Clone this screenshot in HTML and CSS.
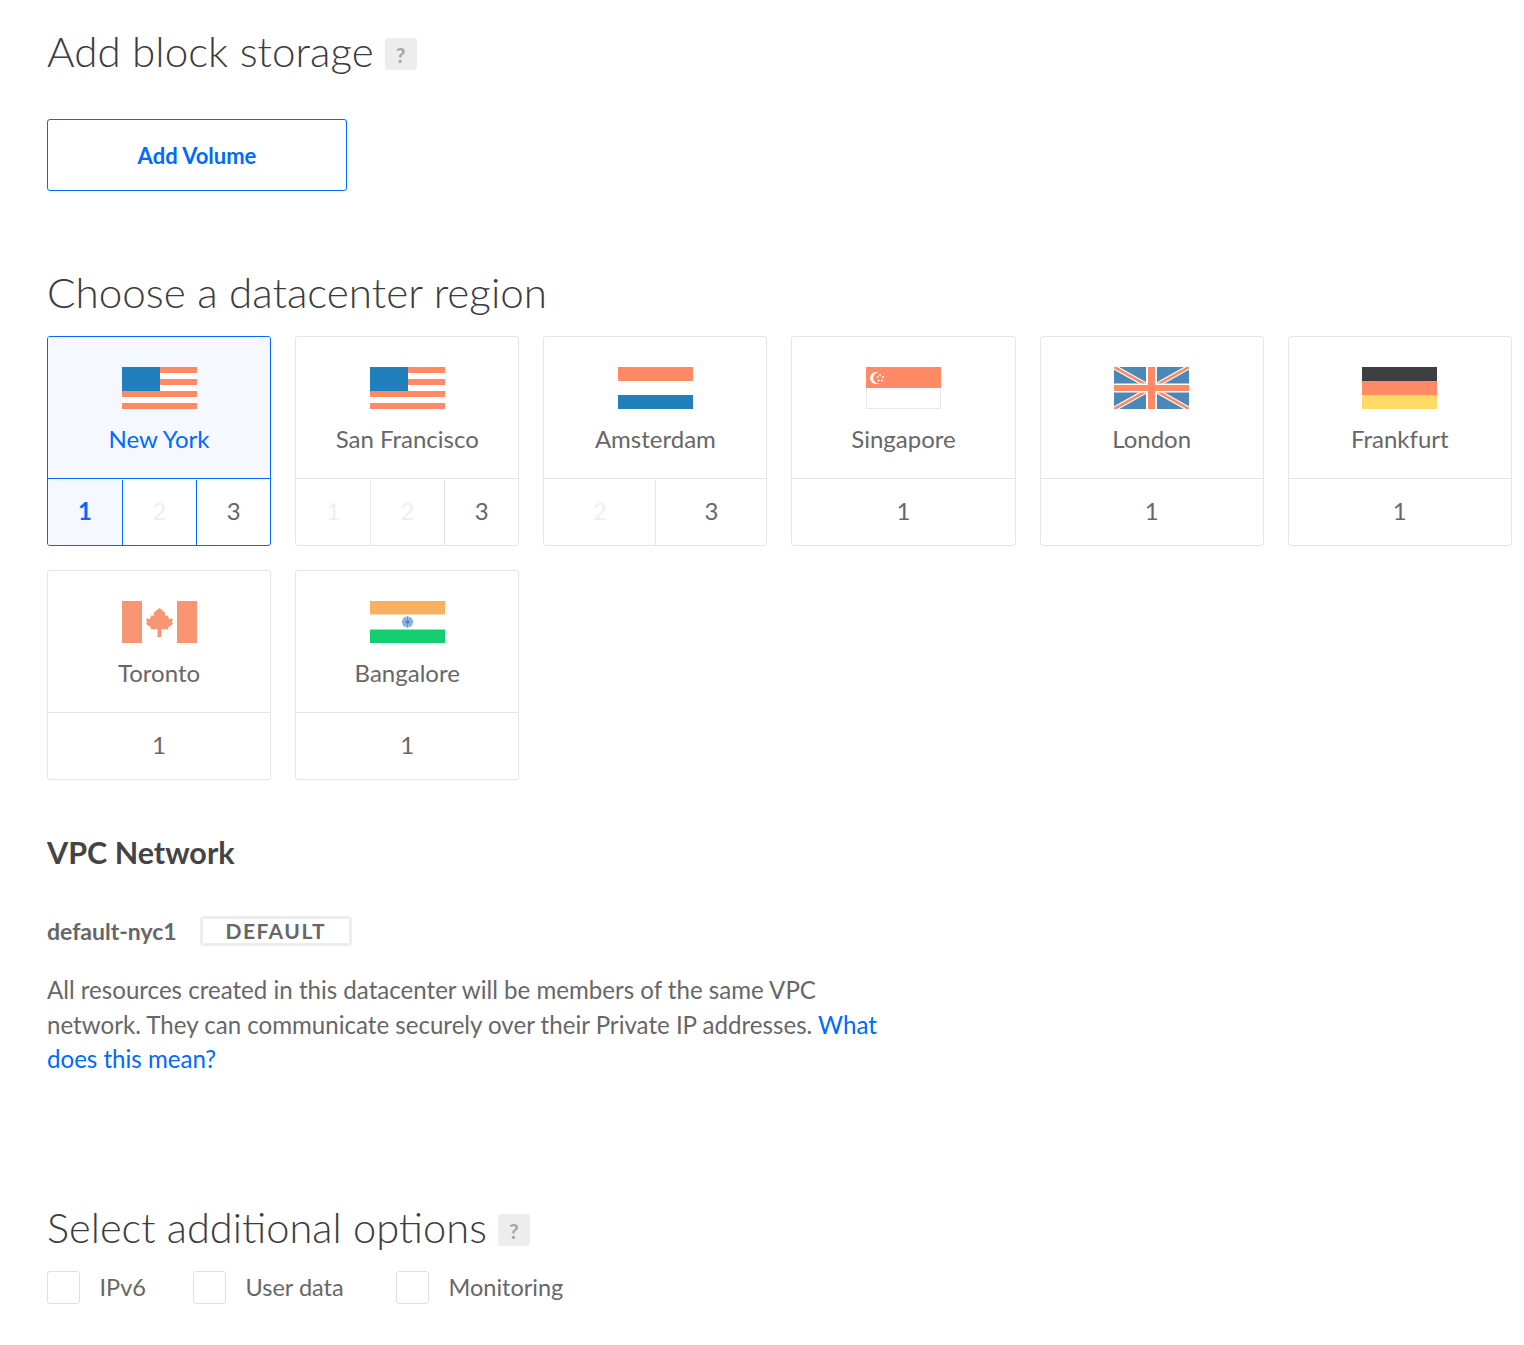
FILE: index.html
```html
<!DOCTYPE html>
<html lang="en">
<head>
<meta charset="utf-8">
<title>Create Droplet</title>
<link rel="stylesheet" href="styles.css">
</head>
<body>
<main class="page">
  <section class="storage">
    <h2 class="title">Add block storage <span class="help">?</span></h2>
    <button class="add-volume" type="button">Add Volume</button>
  </section>

  <section class="regions">
    <h2 class="title">Choose a datacenter region</h2>
    <div class="region-grid">
      <div class="card selected">
        <div class="card-top">
          <svg class="flag" viewBox="0 0 75 42"><rect width="75" height="42" fill="#fff"/><g fill="#ff8a65"><rect x="37" width="38" height="6"/><rect x="37" y="12" width="38" height="6"/><rect y="24" width="75" height="6"/><rect y="36" width="75" height="6"/></g><rect width="38" height="24" fill="#1f80bb"/></svg>
          <div class="name">New York</div>
        </div>
        <div class="cells"><span class="cell active">1</span><span class="cell off">2</span><span class="cell">3</span></div>
      </div>
      <div class="card">
        <div class="card-top">
          <svg class="flag" viewBox="0 0 75 42"><rect width="75" height="42" fill="#fff"/><g fill="#ff8a65"><rect x="37" width="38" height="6"/><rect x="37" y="12" width="38" height="6"/><rect y="24" width="75" height="6"/><rect y="36" width="75" height="6"/></g><rect width="38" height="24" fill="#1f80bb"/></svg>
          <div class="name">San Francisco</div>
        </div>
        <div class="cells"><span class="cell off">1</span><span class="cell off">2</span><span class="cell">3</span></div>
      </div>
      <div class="card">
        <div class="card-top">
          <svg class="flag" viewBox="0 0 75 42"><rect width="75" height="14" fill="#ff8a65"/><rect y="14" width="75" height="14" fill="#fff"/><rect y="28" width="75" height="14" fill="#1f80bb"/></svg>
          <div class="name">Amsterdam</div>
        </div>
        <div class="cells"><span class="cell off">2</span><span class="cell">3</span></div>
      </div>
      <div class="card">
        <div class="card-top">
          <svg class="flag" viewBox="0 0 75 42"><rect x=".5" y="20" width="74" height="21.500" fill="#fff" stroke="#e8e8e8"/><rect width="75" height="21" fill="#ff8a65"/><circle cx="10" cy="11" r="6" fill="#fff"/><circle cx="12.500" cy="11" r="5.400" fill="#ff8a65"/><g fill="#fff"><circle cx="14" cy="8.200" r="1"/><circle cx="17" cy="10" r="1"/><circle cx="16" cy="13.400" r="1"/><circle cx="12.600" cy="13.400" r="1"/><circle cx="11.600" cy="10" r="1"/></g></svg>
          <div class="name">Singapore</div>
        </div>
        <div class="cells"><span class="cell">1</span></div>
      </div>
      <div class="card">
        <div class="card-top">
          <svg class="flag" viewBox="0 0 75 42"><rect width="75" height="42" fill="#4b88b8"/><path d="M0 0 75 42M75 0 0 42" stroke="#fff" stroke-width="5"/><path d="M0 0 75 42M75 0 0 42" stroke="#ff8a65" stroke-width="2.800"/><rect x="32" width="11" height="42" fill="#fff"/><rect y="16.500" width="75" height="9" fill="#fff"/><rect x="34" width="7" height="42" fill="#ff8a65"/><rect y="18" width="75" height="6" fill="#ff8a65"/></svg>
          <div class="name">London</div>
        </div>
        <div class="cells"><span class="cell">1</span></div>
      </div>
      <div class="card">
        <div class="card-top">
          <svg class="flag" viewBox="0 0 75 42"><rect width="75" height="14" fill="#3f3f3f"/><rect y="14" width="75" height="14" fill="#ff8a65"/><rect y="28" width="75" height="14" fill="#ffdb66"/></svg>
          <div class="name">Frankfurt</div>
        </div>
        <div class="cells"><span class="cell">1</span></div>
      </div>
      <div class="card">
        <div class="card-top">
          <svg class="flag" viewBox="0 0 75 42"><rect width="20" height="42" fill="#f89673"/><rect x="55" width="20" height="42" fill="#f89673"/><path d="M37.500 7 43 11.500 43.500 15 46 14.500 47 18 51 17.500 50 21 51 23 46.500 26 46 28.500 39.500 28 39.500 36 35.500 36 35.500 28 29 28.500 28.500 26 24 23 25 21 24 17.500 28 18 29 14.500 31.500 15 32 11.500Z" fill="#f89673"/></svg>
          <div class="name">Toronto</div>
        </div>
        <div class="cells"><span class="cell">1</span></div>
      </div>
      <div class="card">
        <div class="card-top">
          <svg class="flag" viewBox="0 0 75 42"><rect width="75" height="13.500" fill="#f6b162"/><rect y="28.500" width="75" height="13.500" fill="#14cf6f"/><circle cx="37.500" cy="21" r="5.700" fill="#9dbee6"/><circle cx="37.500" cy="21" r="1.600" fill="#2f6fb8"/><path d="M37.500 15.500v11M32 21h11M33.600 17.100l7.800 7.800M41.400 17.100l-7.800 7.800" stroke="#4a86c8" stroke-width=".8"/></svg>
          <div class="name">Bangalore</div>
        </div>
        <div class="cells"><span class="cell">1</span></div>
      </div>
    </div>
  </section>

  <section class="vpc">
    <h3 class="vpc-title">VPC Network</h3>
    <div class="vpc-row"><span class="vpc-name">default-nyc1</span><span class="badge">DEFAULT</span></div>
    <p class="vpc-text">All resources created in this datacenter will be members of the same VPC network. They can communicate securely over their Private IP addresses. <a href="#">What does this mean?</a></p>
  </section>

  <section class="options">
    <h2 class="title title-tight">Select additional options <span class="help">?</span></h2>
    <div class="option-row">
      <label class="option"><span class="box"></span>IPv6</label>
      <label class="option"><span class="box"></span>User data</label>
      <label class="option"><span class="box"></span>Monitoring</label>
    </div>
  </section>
</main>
</body>
</html>
```
FILE: styles.css
```css
* { box-sizing: border-box; }
html, body { margin: 0; background: #fff; }
body { font-family: Lato, "Open Sans", sans-serif; color: #676767; }
.page { padding: 27px 12.100px 0 47px; height: 1345px; overflow: hidden; }

.title {
  margin: 0;
  font-size: 42.200px;
  line-height: 48px;
  font-weight: 300;
  color: #3c3c3c;
  display: flex;
  align-items: center;
  gap: 11px;
}
.title-tight { font-size: 41.600px; }
.help {
  width: 32px;
  height: 32px;
  margin-top: 6px;
  border-radius: 3px;
  background: #ededed;
  color: #a5a5a5;
  font-size: 21px;
  font-weight: 700;
  line-height: 34px;
  text-align: center;
}

.add-volume {
  display: block;
  width: 300px;
  height: 72px;
  margin-top: 44px;
  background: #fff;
  border: 1px solid #0069ff;
  border-radius: 3px;
  color: #0069ff;
  font: 700 22px Lato, sans-serif;
}

.regions { margin-top: 77px; }
.region-grid {
  margin-top: 20px;
  display: grid;
  grid-template-columns: repeat(6, 1fr);
  gap: 24px;
}
.card {
  height: 210px;
  border: 1px solid #e5e5e5;
  border-radius: 3px;
  display: flex;
  flex-direction: column;
  overflow: hidden;
}
.card-top {
  height: 142px;
  padding-top: 30px;
  border-bottom: 1px solid #e5e5e5;
  text-align: center;
}
.flag { display: block; width: 75px; height: 42px; margin: 0 auto; }
.name { margin-top: 14px; font-size: 24px; line-height: 32px; }
.cells { flex: 1; display: grid; grid-auto-flow: column; grid-auto-columns: 1fr; }
.cell {
  border-left: 1px solid #e5e5e5;
  margin-top: 1px;
  font-size: 24px;
  line-height: 62px;
  text-align: center;
}
.cell:first-child { border-left: 0; }
.cell.off { color: #efefef; }

.card.selected { border-color: #0069ff; }
.card.selected .card-top { background: #f5f8ff; border-bottom-color: #0069ff; color: #0069ff; }
.card.selected .cell { border-left-color: #0069ff; }
.card.selected .cell.active { background: #f5f8ff; color: #0069ff; font-weight: 700; }

.vpc { margin-top: 52px; }
.vpc-title { margin: 0; font-size: 30.500px; line-height: 40px; font-weight: 700; color: #444; }
.vpc-row { margin-top: 43px; display: flex; align-items: center; gap: 23px; }
.vpc-name { font-size: 23px; font-weight: 700; }
.badge {
  width: 152px;
  height: 30px;
  margin-top: 1px;
  border: 3px solid #ededed;
  border-radius: 4px;
  font-size: 21px;
  font-weight: 700;
  letter-spacing: 1.500px;
  line-height: 24px;
  text-align: center;
}
.vpc-text { margin: 27px 0 0; width: 850px; font-size: 24.100px; line-height: 34.500px; }
.vpc-text a { color: #0069ff; text-decoration: none; }

.options { margin-top: 126px; }
.option-row { margin-top: 20px; display: grid; grid-template-columns: 146px 203px auto; justify-content: start; }
.option { display: flex; align-items: center; gap: 19.500px; font-size: 23.500px; line-height: 33px; }
.box { width: 33px; height: 33px; border: 1px solid #e0e0e0; border-radius: 3px; }
```
